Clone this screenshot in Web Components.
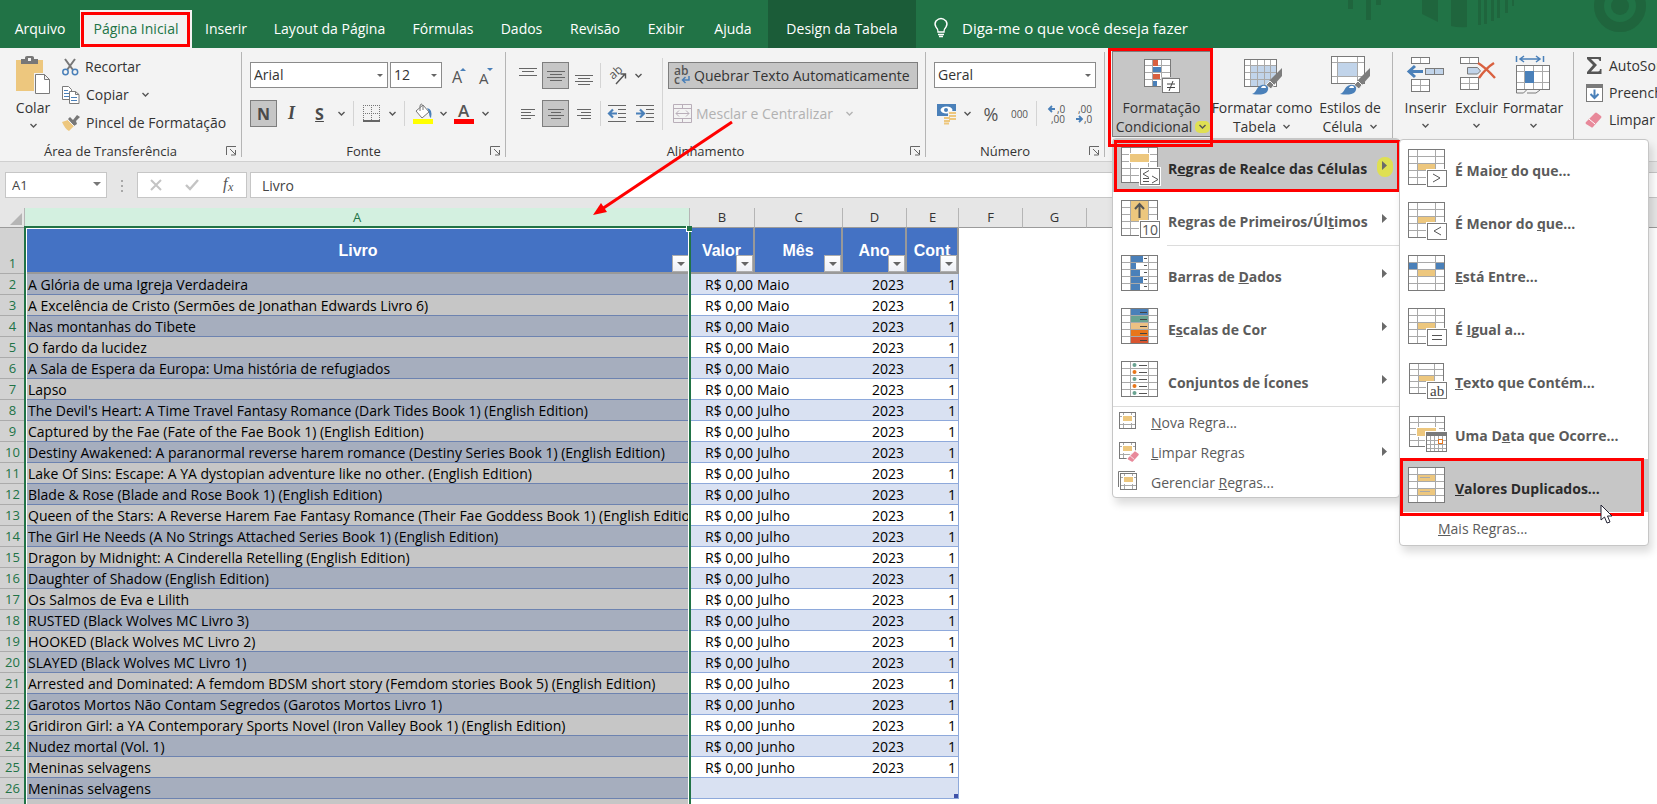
<!DOCTYPE html>
<html lang="pt-BR">
<head>
<meta charset="utf-8">
<title>Planilha de livros</title>
<style>
html,body{margin:0;height:100%}
body{overflow:hidden;background:#fff;color:#333;font:14px/20px "Open Sans","Noto Sans",sans-serif}
</style>
</head>
<body>
<xl-app></xl-app>
<script>
const define = (name, html, setup) => customElements.define(name, class extends HTMLElement {
  connectedCallback() {
    if (this.shadowRoot) return;
    const root = this.attachShadow({ mode: 'open' });
    const t = document.createElement('template');
    t.innerHTML = typeof html === 'function' ? html(this) : html;
    root.append(t.content.cloneNode(true));
    if (setup) setup(this, root);
  }
});

/* ---------- icons ---------- */
const GR = '#7a7a7a', LN = '#a9a9a9', BL = '#4a80b9', OR = '#edc77e', RD = '#d9603f';
const range = (n, step, from = 0) => Array.from({ length: n }, (_, i) => from + i * step);
const rect = (x, y, w, h, f) => `<rect x="${x}" y="${y}" width="${w}" height="${h}" fill="${f}"/>`;
const path = (d, c = GR, w = 1) => `<path d="${d}" fill="none" stroke="${c}" stroke-width="${w}"/>`;
const grid = (x, y, w, h, xs, ys, fills = '') =>
  rect(x, y, w, h, '#fff') +
  path(xs.map(v => `M${x + v + .5} ${y}v${h}`).join('') + ys.map(v => `M${x} ${y + v + .5}h${w}`).join(''), LN) +
  fills + `<rect x="${x + .5}" y="${y + .5}" width="${w - 1}" height="${h - 1}" fill="none" stroke="${GR}"/>`;
const big = f => grid(0, 0, 37, 36, [9, 27], [7, 14, 21, 28], f);
const badge = (c, x = 19, y = 21) => rect(x - 1, y - 1, 22, 19, '#fff') + `<rect x="${x + .5}" y="${y + .5}" width="19" height="16" fill="#fff" stroke="${GR}"/>` + c;
const small = (x, y) => grid(x, y, 17, 17, [4, 12], [4, 12], rect(x + 3, y + 3, 11, 8, '#fff') + rect(x + 4, y + 4, 9, 5, OR));
const lines = (ls) => path(ls.map(([x, y, w]) => `M${x} ${y + .5}h${w}`).join(''), '#666');
const brush = (x, y) => `<g transform="translate(${x} ${y})"><path d="M30 0v8l-8 9-5-4z" fill="#7d7d7d"/><path d="M18 13l4 4-3 4-5-4z" fill="#7d7d7d" stroke="#f3f3f3"/><path d="M0 26c5-1 4-8 10-9 5-1 8 3 5 7-3 3-9 3-15 2z" fill="${BL}"/><path d="M9 20c1-3 5-3 5 0" fill="#fff"/></g>`;
const eraser = (x, y) => `<g transform="translate(${x} ${y})"><path d="M0 10L9 1q1-1 2 0l4 3q1 1 0 2L7 15q-1 1-2 0l-5-3q-1-1 0-2z" fill="#e8899a"/><path d="M3 7l6 5" stroke="#fff"/></g>`;

const ICONS = {
  chevron: [9, 6, path('M1.5 1l3 3 3-3', '#555', 1.4)],
  launcher: [11, 10, path('M.5 9V.5H10M4 3l5 5M9.500 4v5H5', '#666')],
  paste: [36, 40, rect(1, 4, 27, 31, OR) + `<path d="M6 3h4V1.500Q10 0 12 0h5q2 0 2 1.500V3h4v5H6z" fill="#777"/>` + rect(13, 2, 3, 3, '#f3f3f3') + `<path d="M19 17h12l5 5v17H19z" fill="#f3f3f3"/><path d="M20.500 18.500h9l5 5v14h-14zM29.500 18.500v5h5" fill="#fff" stroke="${GR}"/>`],
  cut: [17, 18, path('M3 1l8 11M13 1L5 12', '#777', 2) + `<circle cx="3.500" cy="14" r="2.700" fill="none" stroke="${BL}" stroke-width="1.500"/><circle cx="13" cy="14" r="2.700" fill="none" stroke="${BL}" stroke-width="1.500"/>`],
  copy: [18, 18, `<path d="M.5.5h6l3 3v10h-9z" fill="#fff" stroke="${GR}"/>` + path('M2 4.500h4M2 7.500h5M2 10.500h5', BL) + `<path d="M7.500 5.500h6l3.500 3v9H7.500zM13.500 5.500v3h3.500" fill="#fff" stroke="${GR}"/>` + path('M9 11.500h6M9 14.500h6', BL)],
  painter: [18, 16, `<path d="M0 7l6-2 6 6-5 5q-4-2-7-9z" fill="${OR}"/><path d="M6 4l2-2 3 3 4-5 3 2-4 4 1 3-3 2z" fill="#777"/><path d="M6 5l6 6" stroke="#f3f3f3"/>`],
  grow: [16, 20, `<text x="1" y="17" font-size="16" fill="#555">A</text><path d="M9 5l3-3 3 3z" fill="${BL}"/>`],
  shrink: [16, 20, `<text x="1" y="18" font-size="15" fill="#555">A</text><path d="M9 2h6l-3 3z" fill="${BL}"/>`],
  borders: [18, 18, path('M.5 0v15M8.500 0v15M16.500 0v15M0 .5h17M0 8.500h17', '#777').replace('/>', ' stroke-dasharray="1 1"/>') + rect(0, 15, 17, 2, '#666')],
  bucket: [20, 22, `<path d="M3 8l7-6 6 7-7 6z" fill="#fff" stroke="#777"/><path d="M7 8V3q1-4 3 0v4" fill="none" stroke="#777"/><path d="M14 5q6 1 4 10-2-1-2-6z" fill="${BL}"/>` + rect(0, 16, 20, 5, '#ff0')],
  fontcolor: [20, 22, `<text x="4" y="14" font-size="17" font-weight="600" fill="#555">A</text>` + rect(0, 16, 20, 5, '#f00')],
  atop: [18, 20, lines([[0, 2, 18], [3, 5, 12], [0, 9, 18]])],
  amid: [18, 20, lines([[0, 5, 18], [3, 8, 12], [0, 11, 18], [3, 14, 12]])],
  abot: [18, 20, lines([[0, 9, 18], [3, 12, 12], [0, 15, 18], [3, 18, 12]])],
  aleft: [14, 12, lines([[0, 1, 14], [0, 4, 10], [0, 7, 14], [0, 10, 10]])],
  acen: [16, 12, lines([[0, 1, 16], [3, 4, 10], [0, 7, 16], [3, 10, 10]])],
  aright: [14, 12, lines([[0, 1, 14], [4, 4, 10], [0, 7, 14], [4, 10, 10]])],
  orient: [19, 19, `<text transform="translate(5 14) rotate(-42)" font-size="12" fill="#555">ab</text>` + path('M8 18L17 8M12.500 8H17.500V12.500', '#555', 1.400)],
  outdent: [18, 17, lines([[0, 0, 18], [10, 4, 8], [10, 8, 8], [10, 12, 8], [0, 16, 18]]) + path('M9 8.500H2M5 4.500l-4 4 4 4', BL, 2.200)],
  indent: [18, 17, lines([[0, 0, 18], [10, 4, 8], [10, 8, 8], [10, 12, 8], [0, 16, 18]]) + path('M0 8.500h7M4 4.500l4 4-4 4', BL, 2.200)],
  wrap: [17, 18, `<text x="1" y="8" font-size="12" font-weight="600" fill="#555">ab</text><text x="1" y="17" font-size="12" font-weight="600" fill="#555">c</text>` + path('M16 9v4h-6M12.500 10L9.500 13l3 3', BL, 1.500)],
  merge: [19, 19, path('M.5.500h18v18H.5zM0 4.500h19M0 14.500h19M9.500 0v4.500M9.500 14.500V19M3 9.500h13M6 6.500l-3 3 3 3M13 6.500l3 3-3 3', '#b9aeb9')],
  money: [20, 20, rect(0, 0, 19, 12, BL) + `<ellipse cx="9.500" cy="6" rx="6" ry="3.500" fill="#fff"/><circle cx="9" cy="6" r="2" fill="${BL}"/>` + rect(11, 7, 8, 12, '#f3f3f3') + rect(6, 12, 7, 8, '#f3f3f3') + path('M12 9h7M12 12h7M12 15h7M7 14h6M7 17h6M7 19.500h5', OR, 2)],
  decInc: [17, 20, `<text x="9" y="9" font-size="10" fill="#555">,0</text><text x="3" y="19" font-size="10" fill="#555">,00</text>` + path('M7 5H1M4 2L1 5l3 3', BL, 1.800)],
  decDec: [17, 20, `<text x="2" y="9" font-size="10" fill="#555">,00</text><text x="8" y="19" font-size="10" fill="#555">,0</text>` + path('M0 15h6M3 12l3 3-3 3', BL, 1.800)],
  cond: [38, 38, grid(1, 3, 27, 28, [8, 17], [6, 13, 20], rect(10, 4, 5, 6, RD) + rect(10, 11, 8, 5, BL) + rect(10, 18, 7, 5, RD) + rect(10, 25, 4, 5, BL)) + rect(18, 21, 21, 17, '#c6c6c6') + `<rect x="19.500" y="22.500" width="17" height="14" fill="#fff" stroke="${GR}"/>` + path('M24 28h8M24 31.500h8M30 25l-4 10', '#444')],
  fmtTable: [38, 40, grid(1, 3, 33, 28, [6, 13, 20, 26], [6, 13, 20], rect(8, 10, 6, 6, '#c1d4ea') + rect(15, 10, 6, 6, '#c1d4ea') + rect(22, 10, 5, 6, '#c1d4ea') + rect(28, 10, 5, 6, '#c1d4ea') + rect(8, 17, 6, 6, '#c1d4ea') + rect(15, 17, 6, 6, '#c1d4ea') + rect(22, 17, 5, 6, '#c1d4ea') + rect(28, 17, 5, 6, '#c1d4ea') + rect(8, 24, 6, 6, '#c1d4ea') + rect(15, 24, 6, 6, '#c1d4ea') + rect(22, 24, 5, 6, '#c1d4ea')) + brush(9, 12)],
  styles: [38, 40, grid(0, 0, 34, 28, [6, 26], [6, 20], rect(7, 7, 19, 13, '#c1d4ea')) + brush(9, 12)],
  insert: [38, 38, grid(4, 1, 19, 7, [9], []) + grid(4, 23, 19, 13, [9], [6]) + `<rect x="18.500" y="12.500" width="18" height="6" fill="#c1d4ea" stroke="${GR}"/>` + path('M27.500 12.500v6') + path('M16 15.500H3M8 10l-6 5.500L8 21', BL, 3)],
  remove: [38, 38, grid(2, 1, 19, 7, [9], []) + grid(2, 21, 19, 13, [9], [6]) + `<path d="M9.500 11.500h10l3 3.500-3 3h-10z" fill="#c1d4ea" stroke="${GR}"/>` + path('M20 7q7 4 17 15M36 7q-8 5-15 15', RD, 2.400)],
  format: [36, 40, path('M1.500 0v6M28.500 0v6M5 3h20M9 0L5 3l4 3M21 0l4 3-4 3', BL, 1.500) + grid(1, 9, 34, 25, [8, 17, 26], [6, 17], rect(10, 15, 9, 12, BL)) + path('M1.500 34v3h7l3-3M12 37h9l4-3')],
  sigma: [17, 17, `<path d="M1 0h14v4h-1.500q0-2-2-2H5l6 6-6 6.500h7q2 0 2-2.500h1.500v5H1v-2l6-7-6-6z" fill="#555"/>`],
  fill: [17, 18, `<rect x=".5" y=".5" width="16" height="17" fill="#fff" stroke="${GR}"/>` + rect(0, 0, 17, 4, GR) + path('M8.500 5.500v8M4.500 10l4 4 4-4', BL, 2)],
  clear: [17, 17, eraser(0, 1)],
  rules: [40, 40, big(rect(8, 6, 21, 10, '#fff') + rect(9, 7, 19, 8, OR)) + badge(path('M28 23.500l-6 3.500 6 3.500M22 31.500h6M22 34.500h6M31 29l6 3.500-6 3.500', '#555'))],
  top10: [40, 40, big(rect(10, 1, 17, 20, OR)) + path('M18.500 18V5M14 9l4.500-5L23 9', '#555', 2) + badge(`<text x="21" y="35" font-size="14" fill="#555">10</text>`)],
  bars: [40, 40, big([12, 5, 9, 12, 9].map((w, i) => rect(10, 1 + i * 7, 17, 6, '#fff') + rect(10, 1 + i * 7, w, 6, BL) + rect(23, 3 + i * 7, 3, 1, '#555')).join(''))],
  scales: [40, 40, big([BL, '#69a391', '#edc183', '#e8761b', '#d95530'].map((c, i) => rect(10, 1 + i * 7, 17, 6, c) + rect(19, 4 + i * 7, 7, 1, '#444')).join(''))],
  sets: [40, 40, big(range(5, 7).map((y, i) => rect(10, 1 + y, 17, 6, '#fff') + `<circle cx="13.500" cy="${y + 4}" r="2" fill="${i % 2 ? '#e8761b' : '#69a391'}"/>` + rect(18, 4 + y, 8, 1, '#555')).join(''))],
  newRule: [20, 20, small(1, 1)],
  clearRule: [20, 20, small(1, 1) + `<g transform="translate(10 10) scale(.7)"><path d="M-2 10L9-1h3l5 5v3L7 17H4l-6-4z" fill="#fff"/>${eraser(0, 0)}</g>`],
  manage: [20, 20, path('M.5 16V.5H17', GR) + small(2, 2)],
  gt: [40, 40, big(rect(10, 15, 17, 6, OR)) + badge(path('M25 25l7 4-7 4', '#555'))],
  lt: [40, 40, big(rect(10, 15, 17, 6, OR)) + badge(path('M33 25l-7 4 7 4', '#555'))],
  between: [40, 40, big(rect(1, 8, 8, 6, BL) + rect(28, 8, 8, 6, BL) + rect(10, 15, 17, 6, OR))],
  eq: [40, 40, big(rect(10, 15, 17, 6, OR)) + badge(path('M24 27.500h10M24 31.500h10', '#555'))],
  text: [40, 40, grid(1, 2, 35, 31, [9, 25], [6, 12, 18, 24], rect(11, 15, 15, 5, OR)) + badge(`<text x="22" y="35" font-size="15" font-family="Liberation Serif" fill="#444">ab</text>`)],
  date: [40, 40, grid(1, 2, 36, 31, [9, 26], [6, 12, 18, 24], rect(8, 13, 23, 10, '#fff') + rect(9, 14, 19, 8, OR)) + rect(17, 17, 23, 22, '#fff') + grid(18, 18, 21, 20, [4, 8, 12, 16], [8, 12, 16]) + rect(18, 18, 21, 4, GR) + `<rect x="30.500" y="25.500" width="4" height="4" fill="#fff" stroke="#e8761b"/>`],
  dup: [40, 40, big(rect(10, 8, 17, 6, OR) + rect(10, 22, 17, 6, OR) + rect(12, 10, 10, 1, LN) + rect(12, 24, 10, 1, LN))],
  bulb: [16, 21, path('M5 15q0-3-2-5Q1 7 3 4q5-5 10 0 2 3 0 6-2 2-2 5zM5 17.500h6M6 19.500h4', '#fff', 1.400)],
  cancel: [12, 12, path('M1 1l10 10M11 1L1 11', '#c4c4c4', 2)],
  ok: [14, 12, path('M1 6l4 4 8-9', '#c4c4c4', 2.400)],
  fx: [16, 18, `<text x="2" y="13" font-size="16" font-style="italic" font-family="Liberation Serif" fill="#555">f</text><text x="7" y="15" font-size="12" font-style="italic" font-family="Liberation Serif" fill="#555">x</text>`],
  play: [6, 10, '<path d="M0 0l5 4.500L0 9z" fill="#6a6a6a"/>'],
  pointer: [12, 20, '<path d="M1 1v15l3.500-3 2.500 6 3-1-2.500-6H12z" fill="#fff" stroke="#223"/>'],
  arrow: [140, 98, '<path d="M139 1L9 88" stroke="#f00" stroke-width="3"/><path d="M0 94l8-12 6 9z" fill="#f00"/>'],
  decor: [320, 48, `<g fill="#1f653d"><path d="M8 0h5v9H8zM26 0h5v20h-5zM36 0h5v5h-5zM82 0h16v22l-16-8zM111 0h16v27q-8 1-16-1zM138 0h3v25h-3zM144 0h3v24h-3zM151 0h3v21h-3zM157 0h3v18h-3zM165 0h3v13h-3zM172 0h2v6h-2z"/><circle cx="280" cy="6" r="9"/></g><circle cx="280" cy="6" r="21" fill="none" stroke="#1f653d" stroke-width="10"/>`],
};
define('xl-icon', el => {
  const [w, h, body] = ICONS[el.getAttribute('name')];
  return `<style>:host{display:inline-flex;flex:none;font-weight:400}svg{display:block;overflow:visible;font-family:"Open Sans",sans-serif}</style><svg width="${w}" height="${h}" viewBox="0 0 ${w} ${h}" aria-hidden="true">${body}</svg>`;
});

/* red frame laid over the content it marks */
define('xl-mark', `<style>:host{display:block;position:absolute;z-index:5;border:3px solid #f00;pointer-events:none;box-sizing:border-box}</style>`);

/* ---------- tab bar ---------- */
define('xl-tab', `<style>
:host{display:block;position:relative;color:#fff}
button{all:unset;box-sizing:border-box;display:block;width:100%;height:100%;text-align:center;white-space:nowrap;padding-top:10px}
:host([active]) button{background:#f3f3f3;color:#217346;margin-top:10px;height:calc(100% - 10px);padding-top:0}
:host([context]) button{background:#1b5c38}
xl-mark{inset:12px 2px 1px 1px}
</style><button type="button"><slot></slot></button>`, (el, r) => { if (el.hasAttribute('active')) r.append(document.createElement('xl-mark')); });

define('xl-tab-bar', `<style>
:host{display:flex;position:relative;height:48px;background:#217346;color:#fff;overflow:hidden}
nav{display:grid;grid-template-columns:80px 112px 68px 139px 88px 69px 78px 64px 70px 148px;line-height:38px}
.tell{all:unset;display:flex;align-items:center;gap:13px;margin-left:17px;padding-top:7px;white-space:nowrap;font-size:15px}
.decor{position:absolute;right:-3px;top:0}
</style><nav><xl-tab>Arquivo</xl-tab><xl-tab active>Página Inicial</xl-tab><xl-tab>Inserir</xl-tab><xl-tab>Layout da Página</xl-tab><xl-tab>Fórmulas</xl-tab><xl-tab>Dados</xl-tab><xl-tab>Revisão</xl-tab><xl-tab>Exibir</xl-tab><xl-tab>Ajuda</xl-tab><xl-tab context>Design da Tabela</xl-tab></nav>
<button class="tell" type="button"><xl-icon name="bulb"></xl-icon>Diga-me o que você deseja fazer</button><xl-icon class="decor" name="decor"></xl-icon>`);

/* ---------- ribbon parts ---------- */
define('xl-group', el => `<style>
:host{display:flex;flex:none;height:113px}
:host([last]){flex:1;overflow:hidden}
section{flex:1;display:flex;flex-direction:column}
.body{height:95px;display:flex}
footer{display:flex;align-items:center;height:16px;font-size:13px;line-height:16px;padding-right:4px}
footer span{flex:1;text-align:center;padding-right:5px}
footer button{all:unset;display:flex}
i{width:1px;margin:4px 0;background:#b5b5b5}
</style><section><div class="body"><slot></slot></div>${el.getAttribute('caption') ? `<footer><span>${el.getAttribute('caption')}</span><button type="button" aria-label="Mais opções"><xl-icon name="launcher"></xl-icon></button></footer>` : ''}</section>${el.hasAttribute('last') ? '' : '<i></i>'}`);

define('xl-tool', el => `<style>
:host{display:flex;flex:none}
button{all:unset;box-sizing:border-box;display:flex;align-items:center;justify-content:center;gap:4px;width:100%;height:27px;border:1px solid transparent;white-space:nowrap}
:host([on]) button{background:#c6c6c6;border-color:#7e7e7e}
:host([wide]) button{justify-content:flex-start;padding:0 4px}
:host([row]) button{justify-content:flex-start;gap:6px;border:0}
:host([off]){color:#b1b1b1}
</style><button type="button" ${el.hasAttribute('off') ? 'disabled' : ''} ${el.hasAttribute('label') ? `aria-label="${el.getAttribute('label')}"` : ''}>${el.hasAttribute('icon') ? `<xl-icon name="${el.getAttribute('icon')}"></xl-icon>` : ''}<slot></slot></button>`);

define('xl-big', el => `<style>
:host{display:block;position:relative;flex:none;margin-top:3px}
button{all:unset;box-sizing:border-box;display:flex;flex-direction:column;align-items:center;width:100%;height:86px;border:1px solid transparent;padding-top:4px;text-align:center;white-space:nowrap;line-height:19px}
:host([on]) button{background:#c6c6c6;border-color:#7e7e7e}
.ic{height:40px;margin-bottom:2px;display:flex;align-items:flex-start}
</style><button type="button"><span class="ic"><xl-icon name="${el.getAttribute('icon')}"></xl-icon></span><slot></slot></button><slot name="over"></slot>`);

define('xl-select', el => `<style>
:host{display:block;position:relative;flex:none}
select{appearance:none;width:100%;height:26px;box-sizing:border-box;border:1px solid #8b8b8b;border-radius:0;background:#fff;padding:0 0 0 3px;font:inherit;color:#333;display:block}
i{position:absolute;right:5px;top:12px;border:3px solid transparent;border-top-color:#666;border-bottom:0}
</style><select aria-label="${el.getAttribute('label')}"><option>${el.getAttribute('value')}</option></select><i></i>`);

/* ---------- menus ---------- */
define('xl-menu', `<style>
:host{display:block;position:absolute;z-index:3;box-sizing:border-box;background:#fff;border:1px solid #c6c6c6;border-radius:4px;box-shadow:3px 6px 8px rgba(0,0,0,.14);color:#5b5b5b;white-space:nowrap}
</style><div role="menu"><slot></slot></div>`);
define('xl-item', el => `<style>
:host{display:block;position:relative}
button{all:unset;box-sizing:border-box;display:flex;width:100%;height:53px;padding:8px 0 0 8px;font-weight:700}
.t{margin:12px 0 0 7px;flex:1;line-height:20px}
:host([small]) button{height:30px;font-weight:400;padding:4px 0 0 5px}
:host([small]) .t{margin:2px 0 0 13px}
:host([bare]) button{height:33px;padding:7px 0 0 38px}
:host([bare]) .t{margin:0}
:host([on]) button{background:#c6c6c6;color:#2b2b2b}
.a{margin:14px 11px 0 0;height:10px}
:host([small]) .a{margin-top:6px}
:host([lit]) .a{background:#dfe052;border-radius:4px;box-shadow:0 1px 0 5px #dfe052}
</style><button type="button" role="menuitem">${el.hasAttribute('icon') ? `<xl-icon name="${el.getAttribute('icon')}"></xl-icon>` : ''}<span class="t"><slot></slot></span>${el.hasAttribute('sub') ? '<xl-icon class="a" name="play"></xl-icon>' : ''}</button><slot name="over"></slot>`);

define('xl-cond-menu', `<style>
:host{display:block;position:absolute;left:0;top:87px;z-index:3}
.main{left:0;top:0;width:288px}
.sub{left:287px;top:1px;width:250px;padding-top:1px}
hr{height:1px;border:0;margin:0;background:#dcdcdc}
.in{margin:0 0 1px 54px}
xl-mark.one{inset:1px -1px 0 1px}
xl-mark.dup{inset:-1px 4px -4px 0}
.ptr{position:absolute;left:200px;top:45px;z-index:6}
</style>
<xl-menu class="main">
<xl-item icon="rules" sub on lit>R<u>e</u>gras de Realce das Células<span slot="over"><xl-mark class="one"></xl-mark></span></xl-item>
<xl-item icon="top10" sub>Regras de Primeiros/Úl<u>t</u>imos</xl-item><hr class="in">
<xl-item icon="bars" sub>Barras de <u>D</u>ados</xl-item>
<xl-item icon="scales" sub>E<u>s</u>calas de Cor</xl-item>
<xl-item icon="sets" sub>Con<u>j</u>untos de Ícones</xl-item><hr>
<xl-item small icon="newRule"><u>N</u>ova Regra...</xl-item>
<xl-item small icon="clearRule" sub><u>L</u>impar Regras</xl-item>
<xl-item small icon="manage">Gerenciar <u>R</u>egras...</xl-item>
</xl-menu>
<xl-menu class="sub">
<xl-item icon="gt">É Maio<u>r</u> do que...</xl-item>
<xl-item icon="lt">É Menor do <u>q</u>ue...</xl-item>
<xl-item icon="between"><u>E</u>stá Entre...</xl-item>
<xl-item icon="eq">É <u>I</u>gual a...</xl-item>
<xl-item icon="text"><u>T</u>exto que Contém...</xl-item>
<xl-item icon="date">Uma D<u>a</u>ta que Ocorre...</xl-item>
<xl-item icon="dup" on><u>V</u>alores Duplicados...<span slot="over"><xl-mark class="dup"></xl-mark><xl-icon class="ptr" name="pointer"></xl-icon></span></xl-item>
<xl-item small bare><u>M</u>ais Regras...</xl-item>
</xl-menu>`);

define('xl-ribbon', `<style>
:host{display:flex;height:113px;background:#f3f3f3;border-bottom:1px solid #cfcfcf;position:relative;z-index:2}
.col{display:flex;flex-direction:column}
.row{display:flex;height:27px}
.two{padding-top:14px;display:flex;flex-direction:column;gap:11px}
.pad{padding-left:8px}
.w27{width:27px;margin-right:1px}.w26{width:26px}.w28{width:28px}.ch{width:14px}
.sep{width:1px;background:#d4d4d4;margin:1px 5px}
.tall{width:1px;background:#d4d4d4;margin:10px 5px 13px 3px}
.list{padding-top:5px}.list xl-tool{height:28px}
.edit{padding:4px 0 0 12px}.edit xl-tool{height:27px}
.l{display:flex;align-items:center;gap:6px}
.down{margin-top:6px}
.gap{margin-left:8px}
.lit{background:#dfe052;border-radius:2px;box-shadow:0 0 0 3px #dfe052}
.cm{inset:-3px -2px -4px -4px}
</style>
<xl-group caption="Área de Transferência" style="width:242px">
 <xl-big icon="paste" style="width:66px">Colar<xl-icon name="chevron" class="down"></xl-icon></xl-big>
 <div class="col list" style="margin-left:-4px">
  <xl-tool row icon="cut">Recortar</xl-tool>
  <xl-tool row icon="copy">Copiar<xl-icon name="chevron" style="margin-left:6px"></xl-icon></xl-tool>
  <xl-tool row icon="painter">Pincel de Formatação</xl-tool>
 </div>
</xl-group>
<xl-group caption="Fonte" style="width:264px"><div class="two pad">
 <div class="row"><xl-select label="Fonte" value="Arial" style="width:138px;margin-right:2px"></xl-select><xl-select label="Tamanho" value="12" style="width:52px;margin-right:3px"></xl-select><xl-tool class="w28" icon="grow" label="Aumentar fonte"></xl-tool><xl-tool class="w26" icon="shrink" label="Diminuir fonte"></xl-tool></div>
 <div class="row"><xl-tool class="w27" on><b style="font-size:16px;color:#4a4a4a">N</b></xl-tool><xl-tool class="w27"><b style="font:italic 700 18px 'Liberation Serif',serif;color:#4a4a4a">I</b></xl-tool><xl-tool class="w27"><b style="font-size:16px;text-decoration:underline;color:#4a4a4a">S</b></xl-tool><xl-tool class="ch" icon="chevron" label="Sublinhado"></xl-tool><i class="sep"></i><xl-tool class="w26" icon="borders" label="Bordas"></xl-tool><xl-tool class="ch" icon="chevron" label="Tipos de borda"></xl-tool><i class="sep"></i><xl-tool class="w26" icon="bucket" label="Preenchimento"></xl-tool><xl-tool class="ch" icon="chevron" label="Cores de preenchimento"></xl-tool><xl-tool class="w28" icon="fontcolor" label="Cor da fonte"></xl-tool><xl-tool class="ch" icon="chevron" label="Cores da fonte"></xl-tool></div>
</div></xl-group>
<xl-group caption="Alinhamento" style="width:420px"><div class="two pad">
 <div class="row"><xl-tool class="w27" icon="atop" label="Em cima"></xl-tool><xl-tool class="w27" on icon="amid" label="No meio"></xl-tool><xl-tool class="w27" icon="abot" label="Embaixo"></xl-tool><i class="sep" style="margin:1px 2px"></i><xl-tool class="w28" icon="orient" label="Orientação"></xl-tool><xl-tool class="ch" icon="chevron" label="Opções de orientação"></xl-tool></div>
 <div class="row"><xl-tool class="w27" icon="aleft" label="À esquerda"></xl-tool><xl-tool class="w27" on icon="acen" label="Centralizar"></xl-tool><xl-tool class="w27" icon="aright" label="À direita"></xl-tool><i class="sep" style="margin:1px 2px"></i><xl-tool class="w28" icon="outdent" label="Diminuir recuo"></xl-tool><xl-tool class="w28" icon="indent" label="Aumentar recuo"></xl-tool></div>
 </div><i class="tall"></i><div class="two"><div class="row"><xl-tool wide on icon="wrap" style="width:250px">Quebrar Texto Automaticamente</xl-tool></div><div class="row"><xl-tool wide off icon="merge">Mesclar e Centralizar<xl-icon name="chevron" class="gap" style="opacity:.4"></xl-icon></xl-tool></div></div>
</xl-group>
<xl-group caption="Número" style="width:179px"><div class="two pad">
 <div class="row"><xl-select label="Formato de número" value="Geral" style="width:162px"></xl-select></div>
 <div class="row"><xl-tool class="w26" icon="money" label="Moeda"></xl-tool><xl-tool class="ch" icon="chevron" label="Moedas"></xl-tool><xl-tool style="width:34px"><span style="font-size:18px;color:#555">%</span></xl-tool><xl-tool style="width:23px"><span style="font-size:10px;color:#555">000</span></xl-tool><i class="sep"></i><xl-tool class="w28" icon="decInc" label="Aumentar casas"></xl-tool><xl-tool class="w28" icon="decDec" label="Diminuir casas"></xl-tool></div>
</div></xl-group>
<xl-group style="width:288px">
 <xl-big on icon="cond" style="width:99px;margin-left:7px">Formatação<span class="l">Condicional<xl-icon name="chevron" class="lit"></xl-icon></span><span slot="over"><xl-cond-menu></xl-cond-menu><xl-mark class="cm"></xl-mark></span></xl-big>
 <xl-big icon="fmtTable" style="width:102px">Formatar como<span class="l">Tabela<xl-icon name="chevron"></xl-icon></span></xl-big>
 <xl-big icon="styles" style="width:74px">Estilos de<span class="l">Célula<xl-icon name="chevron"></xl-icon></span></xl-big>
</xl-group>
<xl-group style="width:181px">
 <xl-big icon="insert" style="width:55px;margin-left:5px">Inserir<xl-icon name="chevron" class="down"></xl-icon></xl-big>
 <xl-big icon="remove" style="width:47px">Excluir<xl-icon name="chevron" class="down"></xl-icon></xl-big>
 <xl-big icon="format" style="width:66px">Formatar<xl-icon name="chevron" class="down"></xl-icon></xl-big>
</xl-group>
<xl-group last><div class="col edit"><xl-tool row icon="sigma">AutoSoma</xl-tool><xl-tool row icon="fill">Preencher</xl-tool><xl-tool row icon="clear">Limpar</xl-tool></div></xl-group>`);

/* ---------- formula bar ---------- */
define('xl-formula-bar', `<style>
:host{display:flex;box-sizing:border-box;height:36px;padding:10px 0 0 5px;background:#e6e6e6}
.box,input{box-sizing:border-box;height:26px;border:1px solid #c6c6c6;background:#fff;font:inherit;color:#444;border-radius:0;margin:0}
.n{position:relative;width:102px}
.n input{width:100%;padding:0 0 0 6px;font-size:13px;display:block}
.n i{position:absolute;right:6px;top:10px;border:4px solid transparent;border-top-color:#777;border-bottom:0}
.d{width:30px;display:flex;flex-direction:column;align-items:center;gap:3px;padding-top:8px;height:18px}
.d i{width:2px;height:2px;background:#a8a8a8}
.box{width:110px;display:flex;justify-content:space-between;align-items:center;margin-right:3px;padding:0 9px 0 12px}
.box button{all:unset;display:flex}
.f{flex:1;min-width:0;padding:0 0 0 11px;border-right:0}
</style><div class="n"><input aria-label="Caixa de nome" value="A1"><i></i></div><div class="d"><i></i><i></i><i></i></div>
<div class="box"><button type="button" aria-label="Cancelar"><xl-icon name="cancel"></xl-icon></button><button type="button" aria-label="Inserir"><xl-icon name="ok"></xl-icon></button><button type="button" aria-label="Inserir função"><xl-icon name="fx"></xl-icon></button></div><input class="f" aria-label="Fórmula" value="Livro">`);

/* ---------- sheet ---------- */
const BOOKS = `A Glória de uma Igreja Verdadeira|Maio
A Excelência de Cristo (Sermões de Jonathan Edwards Livro 6)|Maio
Nas montanhas do Tibete|Maio
O fardo da lucidez|Maio
A Sala de Espera da Europa: Uma história de refugiados|Maio
Lapso|Maio
The Devil's Heart: A Time Travel Fantasy Romance (Dark Tides Book 1) (English Edition)|Julho
Captured by the Fae (Fate of the Fae Book 1) (English Edition)|Julho
Destiny Awakened: A paranormal reverse harem romance (Destiny Series Book 1) (English Edition)|Julho
Lake Of Sins: Escape: A YA dystopian adventure like no other. (English Edition)|Julho
Blade &amp; Rose (Blade and Rose Book 1) (English Edition)|Julho
Queen of the Stars: A Reverse Harem Fae Fantasy Romance (Their Fae Goddess Book 1) (English Edition)|Julho
The Girl He Needs (A No Strings Attached Series Book 1) (English Edition)|Julho
Dragon by Midnight: A Cinderella Retelling (English Edition)|Julho
Daughter of Shadow (English Edition)|Julho
Os Salmos de Eva e Lilith|Julho
RUSTED (Black Wolves MC Livro 3)|Julho
HOOKED (Black Wolves MC Livro 2)|Julho
SLAYED (Black Wolves MC Livro 1)|Julho
Arrested and Dominated: A femdom BDSM short story (Femdom stories Book 5) (English Edition)|Julho
Garotos Mortos Não Contam Segredos (Garotos Mortos Livro 1)|Junho
Gridiron Girl: a YA Contemporary Sports Novel (Iron Valley Book 1) (English Edition)|Junho
Nudez mortal (Vol. 1)|Junho
Meninas selvagens|Junho
Meninas selvagens|`.split('\n').map(l => l.split('|'));

define('xl-sheet', () => `<style>
:host{display:block;position:relative;flex:1;min-height:0;overflow:hidden;border-top:10px solid #e6e6e6;color:#000}
table{border-collapse:separate;border-spacing:0;table-layout:fixed;width:100%;line-height:19px}
th,td{box-sizing:border-box;padding:0;font-weight:400;white-space:nowrap;overflow:hidden}
thead th{height:20px;background:#e6e6e6;border-bottom:1px solid #9b9b9b;border-right:1px solid #b5b5b5;font-size:13px;line-height:19px;color:#333}
thead th.a{background:#d3f0e0;color:#217346}
thead th:last-child{border-right:0}
.corner i{display:block;margin:2px 0 0 10px;border:6px solid #b5b5b5;border-top-color:transparent;border-left-color:transparent;width:0;height:0}
tbody th{background:#d2d2d2;border-bottom:1px solid #ababab;color:#217346;font-size:13px;line-height:20px;vertical-align:bottom;text-align:center}
tbody tr{height:21px}
td{height:21px;border-bottom:1px solid #8ea9db;padding:1px 2px 0}
.h td,.h td.a{height:46px;position:relative;background:#4472c4;border-bottom:2px solid #999;border-right:2px solid #999;color:#fff;font:700 16px/42px "Liberation Sans",sans-serif;text-align:center;padding-top:2px}
.h td.a{border-right:0}
.h button{position:absolute;right:0;bottom:0;width:17px;height:17px;box-sizing:border-box;border:1px solid #adadad;background:linear-gradient(#fff,#eef0f6);padding:0}
.h td.a button{right:1px}
.h button::after{content:"";position:absolute;left:4px;top:6px;border:4px solid transparent;border-top-color:#666;border-bottom:0}
.h td.x,td.x{background:#fff;border:0}
.e td{background:#d9e1f2}
td.a{background:#c6c6c6;border-bottom-color:#6d83b0;padding-left:3px}
.e td.a{background:#a6aebe}
tr.e td.x{background:#fff}
.r{text-align:right}
td.d{padding-right:3px}
td.end{border-right:1px solid #8ea9db}
.sel{position:absolute;left:24px;top:18px;width:667px;bottom:-4px;box-sizing:border-box;border:2px solid #217346;box-shadow:inset 0 0 0 1px #fff;pointer-events:none}
.sel i{position:absolute;right:-3px;top:-2px;width:5px;height:5px;background:#217346;border:solid #fff;border-width:0 0 1px 1px}
.pos{position:relative}
.pos i{position:absolute;right:0;bottom:0;width:4px;height:4px;background:#3f51a8}
</style><table><colgroup><col style="width:25px"><col style="width:665px"><col style="width:65px"><col style="width:88px"><col style="width:64px"><col style="width:52px"><col style="width:64px"><col style="width:64px"><col></colgroup>
<thead><tr><th class="corner"><i></i></th><th class="a">A</th><th>B</th><th>C</th><th>D</th><th>E</th><th>F</th><th>G</th><th></th></tr></thead>
<tbody><tr class="h"><th scope="row">1</th>${['Livro', 'Valor', 'Mês', 'Ano', 'Cont'].map((t, i) => `<td class="${i ? '' : 'a'}">${t}<button type="button" aria-label="Filtrar ${t}"></button></td>`).join('')}<td class="x" colspan="3"></td></tr>
${BOOKS.map(([t, m], i) => `<tr class="${i % 2 ? '' : 'e'}"><th scope="row">${i + 2}</th><td class="a">${t}</td><td class="r">${m ? 'R$ 0,00' : ''}</td><td>${m}</td><td class="r d">${m ? '2023' : ''}</td><td class="r end pos">${m ? '1' : '<i></i>'}</td><td class="x" colspan="3"></td></tr>`).join('')}
<tr><th></th><td class="a"></td><td class="x" colspan="7"></td></tr></tbody></table><div class="sel"><i></i></div>`);

define('xl-app', `<style>
:host{display:flex;flex-direction:column;height:100vh;position:relative;overflow:hidden}
.arrow{position:absolute;left:593px;top:121px;z-index:4;pointer-events:none}
</style><xl-tab-bar></xl-tab-bar><xl-ribbon></xl-ribbon><xl-formula-bar></xl-formula-bar><xl-sheet></xl-sheet><xl-icon class="arrow" name="arrow"></xl-icon>`);
</script>
</body>
</html>
